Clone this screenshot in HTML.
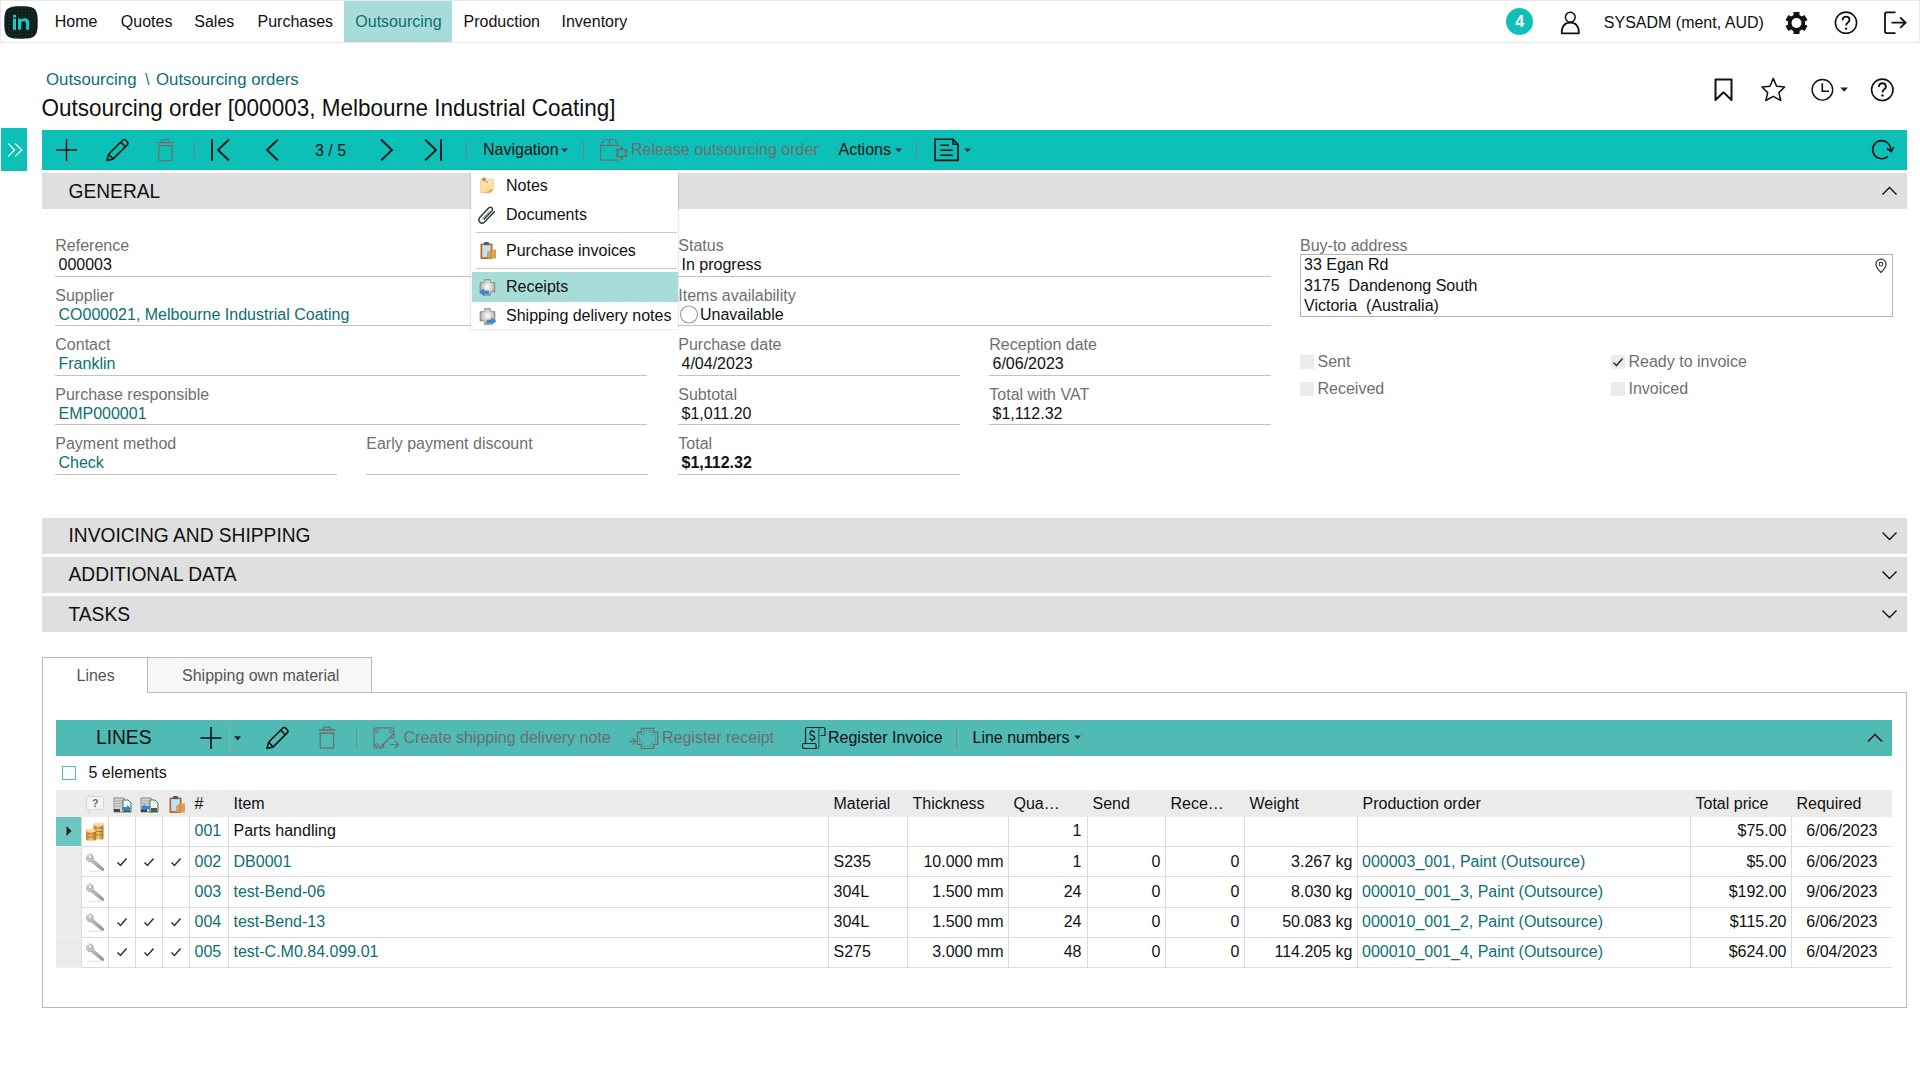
<!DOCTYPE html><html><head><meta charset="utf-8"><style>
html,body{margin:0;padding:0;width:1920px;height:1080px;overflow:hidden;background:#fff;font-family:"Liberation Sans", sans-serif;}
.t{position:absolute;white-space:pre;}
.b{position:absolute;}
</style></head><body>
<div class="b" style="left:0px;top:0px;width:1918px;height:41px;border:1px solid #e9e9e9;background:#fff"></div>
<svg class="b" style="left:4px;top:6px;" width="34" height="33" viewBox="0 0 34 33"><defs><pattern id="dots" width="3.3" height="3.3" patternUnits="userSpaceOnUse"><circle cx="1.6" cy="1.6" r="0.45" fill="#2a6b68"/></pattern></defs>
<path d="M0.3 16.5 C0.3 2.5 2.8 0.3 17 0.3 C31.2 0.3 33.7 2.5 33.7 16.5 C33.7 30.5 31.2 32.7 17 32.7 C2.8 32.7 0.3 30.5 0.3 16.5Z" fill="#0f1d1d"/>
<path d="M0.3 16.5 C0.3 2.5 2.8 0.3 17 0.3 C31.2 0.3 33.7 2.5 33.7 16.5 C33.7 30.5 31.2 32.7 17 32.7 C2.8 32.7 0.3 30.5 0.3 16.5Z" fill="url(#dots)"/>
<rect x="9" y="12.6" width="3" height="11.2" fill="#1ccac2"/><rect x="9" y="8.9" width="3" height="2.6" fill="#1ccac2"/>
<path d="M14 23.8 V12.6 H16.9 V14.1 Q18.3 12.3 20.8 12.3 Q25.1 12.3 25.1 16.9 V23.8 H22.1 V17.6 Q22.1 15.1 20.1 15.1 Q17 15.1 17 18.2 V23.8Z" fill="#1ccac2"/></svg>
<div class="b" style="left:344px;top:1px;width:108px;height:41px;background:#a8dcd9"></div>
<div class="t" style="left:54.80px;top:14px;font-size:16px;line-height:16px;color:#111;font-weight:normal;">Home</div>
<div class="t" style="left:120.80px;top:14px;font-size:16px;line-height:16px;color:#111;font-weight:normal;">Quotes</div>
<div class="t" style="left:194.30px;top:14px;font-size:16px;line-height:16px;color:#111;font-weight:normal;">Sales</div>
<div class="t" style="left:257.50px;top:14px;font-size:16px;line-height:16px;color:#111;font-weight:normal;">Purchases</div>
<div class="t" style="left:355.30px;top:14px;font-size:16px;line-height:16px;color:#0d6f73;font-weight:normal;">Outsourcing</div>
<div class="t" style="left:463.50px;top:14px;font-size:16px;line-height:16px;color:#111;font-weight:normal;">Production</div>
<div class="t" style="left:561.50px;top:14px;font-size:16px;line-height:16px;color:#111;font-weight:normal;">Inventory</div>
<svg class="b" style="left:1506px;top:8px;" width="27" height="27" viewBox="0 0 27 27"><circle cx="13.5" cy="13.5" r="13.5" fill="#12bfb6"/></svg>
<div class="t" style="left:1515.20px;top:14px;font-size:16px;line-height:16px;color:#fff;font-weight:bold;transform:scaleY(1.08);transform-origin:0 13px;">4</div>
<svg class="b" style="left:1559px;top:10px;" width="24" height="26" viewBox="0 0 24 26"><circle cx="11.3" cy="7.2" r="4.9" fill="none" stroke="#111" stroke-width="1.5"/><path d="M2.7 23.3 Q2.7 12.6 11.3 12.6 Q19.9 12.6 19.9 23.3 Z" fill="none" stroke="#111" stroke-width="1.7" stroke-linejoin="round"/></svg>
<div class="t" style="left:1603.80px;top:15px;font-size:16px;line-height:16px;color:#111;font-weight:normal;">SYSADM (ment, AUD)</div>
<svg class="b" style="left:1785px;top:11px;" width="23" height="24" viewBox="0 0 23 24"><g transform="translate(11.5,12)"><g fill="#111">
<rect x="-3" y="-11" width="6" height="22"/><rect x="-3" y="-11" width="6" height="22" transform="rotate(60)"/><rect x="-3" y="-11" width="6" height="22" transform="rotate(120)"/>
<circle r="8.6"/></g><circle r="5" fill="#fff"/></g></svg>
<svg class="b" style="left:1834px;top:11px;" width="24" height="24" viewBox="0 0 24 24"><circle cx="12" cy="11.7" r="10.6" fill="none" stroke="#111" stroke-width="1.6"/><path d="M8.6 9.2 Q8.6 5.6 12 5.6 Q15.5 5.6 15.5 8.8 Q15.5 10.6 13.6 11.7 Q12.2 12.5 12.2 14.6" fill="none" stroke="#111" stroke-width="1.9"/><circle cx="12.1" cy="17.6" r="1.2" fill="#111"/></svg>
<svg class="b" style="left:1883px;top:11px;" width="26" height="24" viewBox="0 0 26 24"><path d="M12.5 1.3 H3.6 Q2 1.3 2 2.9 V20.6 Q2 22.2 3.6 22.2 H12.5" fill="none" stroke="#111" stroke-width="1.8"/><path d="M8.6 11.7 H22.6 M17.2 6.5 L22.6 11.7 L17.2 16.9" fill="none" stroke="#111" stroke-width="1.8"/></svg>
<div class="t" style="left:46.00px;top:72px;font-size:16.8px;line-height:16.8px;color:#0d6f73;font-weight:normal;">Outsourcing</div>
<div class="t" style="left:145.00px;top:72px;font-size:16.8px;line-height:16.8px;color:#0d6f73;font-weight:normal;transform:scaleX(0.9)">\</div>
<div class="t" style="left:156.00px;top:72px;font-size:16.8px;line-height:16.8px;color:#0d6f73;font-weight:normal;">Outsourcing orders</div>
<div class="t" style="left:41.50px;top:98px;font-size:22.5px;line-height:22.5px;color:#111;font-weight:normal;transform:scaleY(1.1);transform-origin:0 18px;">Outsourcing order [000003, Melbourne Industrial Coating]</div>
<svg class="b" style="left:1712px;top:77px;" width="23" height="26" viewBox="0 0 23 26"><path d="M3.5 2.5 H19.5 V23 L11.5 15.3 L3.5 23 Z" fill="none" stroke="#111" stroke-width="2" stroke-linejoin="round"/></svg>
<svg class="b" style="left:1760px;top:76px;" width="27" height="27" viewBox="0 0 27 27"><path d="M13.3 2.4 L16.6 10.2 L24.6 11 L18.9 16.6 L20.8 24.5 L13.3 20.4 L5.8 24.5 L7.7 16.6 L2 11 L10 10.2 Z" fill="none" stroke="#111" stroke-width="1.5" stroke-linejoin="round"/></svg>
<svg class="b" style="left:1810px;top:77px;" width="40" height="26" viewBox="0 0 40 26"><circle cx="12.4" cy="12.8" r="10.3" fill="none" stroke="#111" stroke-width="1.4"/><path d="M12.3 6.2 V14.3 H19" fill="none" stroke="#111" stroke-width="1.6"/><path d="M30.3 10.6 H38 L34.2 14.8Z" fill="#222"/></svg>
<svg class="b" style="left:1870px;top:77px;" width="25" height="26" viewBox="0 0 25 26"><circle cx="12.3" cy="12.8" r="10.7" fill="none" stroke="#111" stroke-width="1.6"/><path d="M8.9 10 Q8.9 6.3 12.4 6.3 Q15.9 6.3 15.9 9.6 Q15.9 11.4 14 12.5 Q12.6 13.3 12.6 15.4" fill="none" stroke="#111" stroke-width="1.9"/><circle cx="12.5" cy="18.4" r="1.2" fill="#111"/></svg>
<div class="b" style="left:1px;top:128px;width:26px;height:43px;background:#0cc0b8"></div>
<svg class="b" style="left:1px;top:128px;" width="26" height="43" viewBox="0 0 26 43"><path d="M7.3 15.6 L13.6 22 L7.3 28.4 M14.3 15.6 L20.8 22 L14.3 28.4" fill="none" stroke="#fff" stroke-width="1.2"/></svg>
<div class="b" style="left:42px;top:130px;width:1865px;height:40px;background:#0cc0b8"></div>
<svg class="b" style="left:54px;top:137px;" width="26" height="26" viewBox="0 0 26 26"><path d="M12.5 2 V24 M2 13 H23" stroke="#111" stroke-width="1.3"/></svg>
<svg class="b" style="left:104px;top:137px;" width="26" height="26" viewBox="0 0 26 26"><path d="M3 23.5 L4.6 17.3 L18.6 3.3 Q20.2 1.7 21.8 3.3 L23.2 4.7 Q24.8 6.3 23.2 7.9 L9.2 21.9 Z M4.6 17.3 L9.2 21.9 M16.8 5.1 L21.4 9.7" fill="none" stroke="#111" stroke-width="1.5" stroke-linejoin="round"/></svg>
<svg class="b" style="left:154px;top:137px;" width="22" height="26" viewBox="0 0 22 26"><path d="M3 5.6 H19.6 M7 5.4 L8.2 2.6 H14.4 L15.6 5.4 M4.8 8.6 H18 V22.4 Q18 23.6 16.8 23.6 H6 Q4.8 23.6 4.8 22.4 Z" fill="none" stroke="#6e6e6e" stroke-width="1.3"/></svg>
<div class="b" style="left:194px;top:141px;width:1px;height:18px;background:#7e7a85"></div>
<svg class="b" style="left:205px;top:137px;" width="30" height="26" viewBox="0 0 30 26"><path d="M7 2 V24 M24 2.5 L13 13 L24 23.5" fill="none" stroke="#111" stroke-width="1.8"/></svg>
<svg class="b" style="left:258px;top:137px;" width="26" height="26" viewBox="0 0 26 26"><path d="M20 2.5 L9 13 L20 23.5" fill="none" stroke="#111" stroke-width="1.8"/></svg>
<div class="t" style="left:315.00px;top:143px;font-size:16px;line-height:16px;color:#111;font-weight:normal;">3 / 5</div>
<svg class="b" style="left:372px;top:137px;" width="26" height="26" viewBox="0 0 26 26"><path d="M9 2.5 L20 13 L9 23.5" fill="none" stroke="#111" stroke-width="1.8"/></svg>
<svg class="b" style="left:418px;top:137px;" width="30" height="26" viewBox="0 0 30 26"><path d="M7 2.5 L18 13 L7 23.5 M23 2 V24" fill="none" stroke="#111" stroke-width="1.8"/></svg>
<div class="b" style="left:466px;top:141px;width:1px;height:18px;background:#7e7a85"></div>
<div class="t" style="left:483.00px;top:142px;font-size:16px;line-height:16px;color:#111;font-weight:normal;">Navigation</div>
<svg class="b" style="left:560px;top:146px;" width="10" height="8" viewBox="0 0 10 8"><path d="M1.2 2.4 H8 L4.6 6.2Z" fill="#333"/></svg>
<div class="b" style="left:583px;top:141px;width:1px;height:18px;background:#7e7a85"></div>
<svg class="b" style="left:598px;top:137px;" width="34" height="26" viewBox="0 0 34 26"><path d="M2.6 8.3 L6.5 2.5 H17 L20.4 8.3 V22.2 Q20.4 23.2 19.4 23.2 H3.6 Q2.6 23.2 2.6 22.2 Z M2.6 8.3 H20.4 M11.5 2.5 V8.3" fill="none" stroke="#6e6e6e" stroke-width="1.2"/><circle cx="23.5" cy="16" r="7.6" fill="#0cc0b8"/><g transform="translate(23.5,16)"><g fill="#6e6e6e"><rect x="-1.4" y="-6.5" width="2.8" height="13"/><rect x="-1.4" y="-6.5" width="2.8" height="13" transform="rotate(60)"/><rect x="-1.4" y="-6.5" width="2.8" height="13" transform="rotate(120)"/><circle r="5"/></g><circle r="3.3" fill="#0cc0b8"/></g></svg>
<div class="t" style="left:631.00px;top:142px;font-size:16px;line-height:16px;color:#6e6e6e;font-weight:normal;">Release outsourcing order</div>
<div class="t" style="left:838.50px;top:142px;font-size:16px;line-height:16px;color:#111;font-weight:normal;">Actions</div>
<svg class="b" style="left:894px;top:146px;" width="10" height="8" viewBox="0 0 10 8"><path d="M1.2 2.4 H8 L4.6 6.2Z" fill="#333"/></svg>
<div class="b" style="left:916px;top:141px;width:1px;height:18px;background:#7e7a85"></div>
<svg class="b" style="left:932px;top:137px;" width="30" height="26" viewBox="0 0 30 26"><path d="M3 2.3 H21 L26 7.3 V23.4 H3 Z M21 2.3 V7.3 H26 M8.2 8.3 H17 M8.2 13.3 H20.8 M8.2 18.3 H20.8" fill="none" stroke="#111" stroke-width="1.6"/></svg>
<svg class="b" style="left:963px;top:146px;" width="10" height="8" viewBox="0 0 10 8"><path d="M1.2 2.4 H8 L4.6 6.2Z" fill="#333"/></svg>
<svg class="b" style="left:1868px;top:136px;" width="28" height="26" viewBox="0 0 28 26"><path d="M19.8 20.3 A9 9 0 1 1 22.7 14" fill="none" stroke="#111" stroke-width="1.6"/><path d="M19 12.5 L23.3 15.6 L25.6 11" fill="none" stroke="#111" stroke-width="1.6"/></svg>
<div class="b" style="left:42px;top:173px;width:1865px;height:36px;background:#dfdfdf"></div>
<div class="t" style="left:68.50px;top:182px;font-size:19.2px;line-height:19.2px;color:#111;font-weight:normal;transform:scaleY(1.07);transform-origin:0 16px;">GENERAL</div>
<svg class="b" style="left:1879.5px;top:183px;" width="20" height="16" viewBox="0 0 20 16"><path d="M2.5 11.5 L9.5 4.5 L16.5 11.5" fill="none" stroke="#111" stroke-width="1.4"/></svg>
<div class="t" style="left:55.30px;top:238px;font-size:16px;line-height:16px;color:#6f6f6f;font-weight:normal;">Reference</div>
<div class="t" style="left:58.50px;top:257px;font-size:16px;line-height:16px;color:#111;font-weight:normal;">000003</div>
<div class="b" style="left:55px;top:276px;width:592px;height:1px;background:#c3c3c3"></div>
<div class="t" style="left:55.30px;top:288px;font-size:16px;line-height:16px;color:#6f6f6f;font-weight:normal;">Supplier</div>
<div class="t" style="left:58.50px;top:307px;font-size:16px;line-height:16px;color:#0d6f73;font-weight:normal;">CO000021, Melbourne Industrial Coating</div>
<div class="b" style="left:55px;top:325px;width:592px;height:1px;background:#c3c3c3"></div>
<div class="t" style="left:55.30px;top:337px;font-size:16px;line-height:16px;color:#6f6f6f;font-weight:normal;">Contact</div>
<div class="t" style="left:58.50px;top:356px;font-size:16px;line-height:16px;color:#0d6f73;font-weight:normal;">Franklin</div>
<div class="b" style="left:55px;top:375px;width:592px;height:1px;background:#c3c3c3"></div>
<div class="t" style="left:55.30px;top:387px;font-size:16px;line-height:16px;color:#6f6f6f;font-weight:normal;">Purchase responsible</div>
<div class="t" style="left:58.50px;top:406px;font-size:16px;line-height:16px;color:#0d6f73;font-weight:normal;">EMP000001</div>
<div class="b" style="left:55px;top:424px;width:592px;height:1px;background:#c3c3c3"></div>
<div class="t" style="left:55.30px;top:436px;font-size:16px;line-height:16px;color:#6f6f6f;font-weight:normal;">Payment method</div>
<div class="t" style="left:58.50px;top:455px;font-size:16px;line-height:16px;color:#0d6f73;font-weight:normal;">Check</div>
<div class="b" style="left:55px;top:474px;width:282px;height:1px;background:#c3c3c3"></div>
<div class="t" style="left:366.30px;top:436px;font-size:16px;line-height:16px;color:#6f6f6f;font-weight:normal;">Early payment discount</div>
<div class="b" style="left:366px;top:474px;width:282px;height:1px;background:#c3c3c3"></div>
<div class="t" style="left:678.30px;top:238px;font-size:16px;line-height:16px;color:#6f6f6f;font-weight:normal;">Status</div>
<div class="t" style="left:681.50px;top:257px;font-size:16px;line-height:16px;color:#111;font-weight:normal;">In progress</div>
<div class="b" style="left:678px;top:276px;width:593px;height:1px;background:#c3c3c3"></div>
<div class="t" style="left:678.30px;top:288px;font-size:16px;line-height:16px;color:#6f6f6f;font-weight:normal;">Items availability</div>
<div class="b" style="left:678px;top:325px;width:593px;height:1px;background:#c3c3c3"></div>
<svg class="b" style="left:679px;top:305px;" width="19" height="19" viewBox="0 0 19 19"><circle cx="10" cy="9.5" r="8.5" fill="#fff" stroke="#999" stroke-width="1.1"/></svg>
<div class="t" style="left:700.00px;top:307px;font-size:16px;line-height:16px;color:#111;font-weight:normal;">Unavailable</div>
<div class="t" style="left:678.30px;top:337px;font-size:16px;line-height:16px;color:#6f6f6f;font-weight:normal;">Purchase date</div>
<div class="t" style="left:681.50px;top:356px;font-size:16px;line-height:16px;color:#111;font-weight:normal;">4/04/2023</div>
<div class="b" style="left:678px;top:375px;width:282px;height:1px;background:#c3c3c3"></div>
<div class="t" style="left:989.30px;top:337px;font-size:16px;line-height:16px;color:#6f6f6f;font-weight:normal;">Reception date</div>
<div class="t" style="left:992.50px;top:356px;font-size:16px;line-height:16px;color:#111;font-weight:normal;">6/06/2023</div>
<div class="b" style="left:989px;top:375px;width:282px;height:1px;background:#c3c3c3"></div>
<div class="t" style="left:678.30px;top:387px;font-size:16px;line-height:16px;color:#6f6f6f;font-weight:normal;">Subtotal</div>
<div class="t" style="left:681.50px;top:406px;font-size:16px;line-height:16px;color:#111;font-weight:normal;">$1,011.20</div>
<div class="b" style="left:678px;top:424px;width:282px;height:1px;background:#c3c3c3"></div>
<div class="t" style="left:989.30px;top:387px;font-size:16px;line-height:16px;color:#6f6f6f;font-weight:normal;">Total with VAT</div>
<div class="t" style="left:992.50px;top:406px;font-size:16px;line-height:16px;color:#111;font-weight:normal;">$1,112.32</div>
<div class="b" style="left:989px;top:424px;width:282px;height:1px;background:#c3c3c3"></div>
<div class="t" style="left:678.30px;top:436px;font-size:16px;line-height:16px;color:#6f6f6f;font-weight:normal;">Total</div>
<div class="t" style="left:681.50px;top:455px;font-size:16px;line-height:16px;color:#111;font-weight:bold;">$1,112.32</div>
<div class="b" style="left:678px;top:474px;width:282px;height:1px;background:#c3c3c3"></div>
<div class="t" style="left:1300.00px;top:238px;font-size:16px;line-height:16px;color:#6f6f6f;font-weight:normal;">Buy-to address</div>
<div class="b" style="left:1300px;top:254px;width:591px;height:61px;border:1px solid #b4b4b4;background:#fff"></div>
<div class="t" style="left:1304.00px;top:257px;font-size:16px;line-height:16px;color:#111;font-weight:normal;">33 Egan Rd</div>
<div class="t" style="left:1304.00px;top:278px;font-size:16px;line-height:16px;color:#111;font-weight:normal;">3175  Dandenong South</div>
<div class="t" style="left:1304.00px;top:298px;font-size:16px;line-height:16px;color:#111;font-weight:normal;">Victoria  (Australia)</div>
<svg class="b" style="left:1874px;top:258px;" width="14" height="16" viewBox="0 0 14 16"><path d="M7 14.5 Q2 9.5 2 6.2 A5 5 0 0 1 12 6.2 Q12 9.5 7 14.5Z" fill="none" stroke="#333" stroke-width="1.2"/><circle cx="7" cy="6.2" r="1.8" fill="none" stroke="#333" stroke-width="1.1"/></svg>
<div class="b" style="left:1300px;top:355px;width:14px;height:14px;background:#ebebeb"></div>
<div class="t" style="left:1317.50px;top:354px;font-size:16px;line-height:16px;color:#6f6f6f;font-weight:normal;">Sent</div>
<div class="b" style="left:1300px;top:382px;width:14px;height:14px;background:#ebebeb"></div>
<div class="t" style="left:1317.50px;top:381px;font-size:16px;line-height:16px;color:#6f6f6f;font-weight:normal;">Received</div>
<div class="b" style="left:1611px;top:355px;width:14px;height:14px;background:#ebebeb"></div>
<svg class="b" style="left:1611px;top:355px;" width="14" height="14" viewBox="0 0 14 14"><path d="M2.5 7.5 L5.5 10.5 L11.5 3.5" fill="none" stroke="#333" stroke-width="1.6"/></svg>
<div class="t" style="left:1628.50px;top:354px;font-size:16px;line-height:16px;color:#6f6f6f;font-weight:normal;">Ready to invoice</div>
<div class="b" style="left:1611px;top:382px;width:14px;height:14px;background:#ebebeb"></div>
<div class="t" style="left:1628.50px;top:381px;font-size:16px;line-height:16px;color:#6f6f6f;font-weight:normal;">Invoiced</div>
<div class="b" style="left:42px;top:518px;width:1865px;height:36px;background:#dfdfdf"></div>
<div class="t" style="left:68.50px;top:526px;font-size:19.2px;line-height:19.2px;color:#111;font-weight:normal;transform:scaleY(1.07);transform-origin:0 16px;">INVOICING AND SHIPPING</div>
<svg class="b" style="left:1879.5px;top:528px;" width="20" height="16" viewBox="0 0 20 16"><path d="M2.5 4.5 L9.5 11.5 L16.5 4.5" fill="none" stroke="#111" stroke-width="1.4"/></svg>
<div class="b" style="left:42px;top:557px;width:1865px;height:36px;background:#dfdfdf"></div>
<div class="t" style="left:68.50px;top:565px;font-size:19.2px;line-height:19.2px;color:#111;font-weight:normal;transform:scaleY(1.07);transform-origin:0 16px;">ADDITIONAL DATA</div>
<svg class="b" style="left:1879.5px;top:567px;" width="20" height="16" viewBox="0 0 20 16"><path d="M2.5 4.5 L9.5 11.5 L16.5 4.5" fill="none" stroke="#111" stroke-width="1.4"/></svg>
<div class="b" style="left:42px;top:596px;width:1865px;height:36px;background:#dfdfdf"></div>
<div class="t" style="left:68.50px;top:605px;font-size:19.2px;line-height:19.2px;color:#111;font-weight:normal;transform:scaleY(1.07);transform-origin:0 16px;">TASKS</div>
<svg class="b" style="left:1879.5px;top:606px;" width="20" height="16" viewBox="0 0 20 16"><path d="M2.5 4.5 L9.5 11.5 L16.5 4.5" fill="none" stroke="#111" stroke-width="1.4"/></svg>
<div class="b" style="left:42px;top:692px;width:1863px;height:314px;border:1px solid #b9b9b9"></div>
<div class="b" style="left:147px;top:657px;width:223px;height:34px;border:1px solid #b9b9b9;background:#f7f7f7"></div>
<div class="b" style="left:42px;top:657px;width:104px;height:35px;border:1px solid #b9b9b9;border-bottom:none;background:#fff"></div>
<div class="t" style="left:76.50px;top:668px;font-size:16px;line-height:16px;color:#555;font-weight:normal;">Lines</div>
<div class="t" style="left:182.00px;top:668px;font-size:16px;line-height:16px;color:#555;font-weight:normal;">Shipping own material</div>
<div class="b" style="left:56px;top:720px;width:1836px;height:36px;background:#50bab5"></div>
<div class="t" style="left:96.00px;top:728px;font-size:19.2px;line-height:19.2px;color:#111;font-weight:normal;transform:scaleY(1.07);transform-origin:0 16px;">LINES</div>
<svg class="b" style="left:199px;top:725px;" width="26" height="26" viewBox="0 0 26 26"><path d="M12 2 V24 M1.5 13 H22.5" stroke="#111" stroke-width="1.6"/></svg>
<svg class="b" style="left:228px;top:725px;" width="3" height="27" viewBox="0 0 3 27"><path d="M1.5 0 V27" stroke="#b3a4ab" stroke-width="1" stroke-dasharray="2.6 1.4"/></svg>
<svg class="b" style="left:232px;top:733px;" width="10" height="10" viewBox="0 0 10 10"><path d="M2.2 3.2 H9 L5.6 7.6Z" fill="#222"/></svg>
<svg class="b" style="left:264px;top:725px;" width="28" height="26" viewBox="0 0 28 26"><path d="M3 23.5 L4.6 17.3 L18.6 3.3 Q20.2 1.7 21.8 3.3 L23.2 4.7 Q24.8 6.3 23.2 7.9 L9.2 21.9 Z M4.6 17.3 L9.2 21.9 M16.8 5.1 L21.4 9.7" fill="none" stroke="#111" stroke-width="1.5" stroke-linejoin="round"/></svg>
<svg class="b" style="left:316px;top:725px;" width="22" height="26" viewBox="0 0 22 26"><path d="M2.4 5 H19.4 M6.8 4.8 L8 2.2 H14 L15.2 4.8 M4.2 8 H17.6 V22 Q17.6 23.2 16.4 23.2 H5.4 Q4.2 23.2 4.2 22 Z" fill="none" stroke="#6e6e6e" stroke-width="1.3"/></svg>
<div class="b" style="left:356px;top:727px;width:1px;height:21px;background:#7f8a8e"></div>
<svg class="b" style="left:371px;top:725px;" width="32" height="26" viewBox="0 0 32 26"><path d="M12.7 23 H4.5 Q2.9 23 2.9 21.4 V4.4 Q2.9 2.8 4.5 2.8 H21.4 Q23 2.8 23 4.4 V12.8 M8.4 23 L23 8.4 M12.7 19 V23 M19 12.8 H23 M19.2 19.5 H27.6 M23.6 15.6 L27.6 19.5 L23.6 23.4" fill="none" stroke="#6e6e6e" stroke-width="1.2"/><circle cx="5.9" cy="6.2" r="1.5" fill="none" stroke="#6e6e6e" stroke-width="1"/><circle cx="20" cy="6.2" r="1.5" fill="none" stroke="#6e6e6e" stroke-width="1"/><circle cx="5.9" cy="20.2" r="1.5" fill="none" stroke="#6e6e6e" stroke-width="1"/></svg>
<div class="t" style="left:403.50px;top:730px;font-size:16px;line-height:16px;color:#6e6e6e;font-weight:normal;">Create shipping delivery note</div>
<svg class="b" style="left:628px;top:725px;" width="32" height="26" viewBox="0 0 32 26"><path d="M13.4 3.4 H25.5 V7.4 H29.7 V19.5 H25.5 V23.5 H13.4 V19.5 H9.4 V7.4 H13.4 Z" fill="none" stroke="#6e6e6e" stroke-width="1.2"/><path d="M15.6 5.6 H23.3 V9.6 H27.5 V17.3 H23.3 V21.3 H15.6 V17.3 H11.6 V9.6 H15.6 Z" fill="none" stroke="#6e6e6e" stroke-width="0.9" stroke-dasharray="1 1.2"/><path d="M1.2 16.4 H7.7 M4.6 13.2 L7.7 16.4 L4.6 19.6" fill="none" stroke="#6e6e6e" stroke-width="1.1"/></svg>
<div class="t" style="left:662.00px;top:730px;font-size:16px;line-height:16px;color:#6e6e6e;font-weight:normal;">Register receipt</div>
<svg class="b" style="left:800px;top:725px;" width="28" height="26" viewBox="0 0 28 26"><path d="M5.5 18.5 V4.5 Q5.5 2.5 7.5 2.5 H23 Q25 2.5 25 4.5 V10.5 H20.5" fill="none" stroke="#222" stroke-width="1.2"/><path d="M20.5 2.8 Q18.8 3.2 18.8 5 V22 Q18.8 23.5 17 23.5" fill="none" stroke="#222" stroke-width="1.2" stroke-dasharray="1.2 0.8"/><path d="M17 23.5 H4 Q2.5 23.5 2.5 21.5 V20 Q2.5 18.5 4 18.5 H15 Q16 18.5 16 20 V22 Q16 23.5 17 23.5" fill="none" stroke="#222" stroke-width="1.2"/><path d="M14.5 8 Q14 6.2 12.2 6.2 Q10 6.2 10 8.2 Q10 10 12.2 10.4 Q14.7 10.9 14.7 12.8 Q14.7 14.8 12.3 14.8 Q10.3 14.8 9.8 13 M12.2 4.8 V6.2 M12.2 14.8 V16.5" fill="none" stroke="#222" stroke-width="1.3"/></svg>
<div class="t" style="left:828.00px;top:730px;font-size:16px;line-height:16px;color:#111;font-weight:normal;">Register Invoice</div>
<div class="b" style="left:956px;top:727px;width:1px;height:21px;background:#7f8a8e"></div>
<div class="t" style="left:972.50px;top:730px;font-size:16px;line-height:16px;color:#111;font-weight:normal;">Line numbers</div>
<svg class="b" style="left:1073px;top:733px;" width="10" height="8" viewBox="0 0 10 8"><path d="M1.2 2.4 H8 L4.6 6.2Z" fill="#333"/></svg>
<svg class="b" style="left:1865px;top:730px;" width="22" height="16" viewBox="0 0 22 16"><path d="M3 11.5 L10 4.5 L17 11.5" fill="none" stroke="#111" stroke-width="1.5"/></svg>
<div class="b" style="left:62px;top:766px;width:12px;height:12px;border:1px solid #50bab5;background:#fff"></div>
<div class="t" style="left:88.50px;top:765px;font-size:16px;line-height:16px;color:#111;font-weight:normal;">5 elements</div>
<div class="b" style="left:56px;top:790px;width:1836px;height:27px;background:#ebebeb"></div>
<div class="t" style="left:194.50px;top:796px;font-size:16px;line-height:16px;color:#111;font-weight:normal;">#</div>
<div class="t" style="left:233.50px;top:796px;font-size:16px;line-height:16px;color:#111;font-weight:normal;">Item</div>
<div class="t" style="left:833.50px;top:796px;font-size:16px;line-height:16px;color:#111;font-weight:normal;">Material</div>
<div class="t" style="left:912.50px;top:796px;font-size:16px;line-height:16px;color:#111;font-weight:normal;">Thickness</div>
<div class="t" style="left:1013.50px;top:796px;font-size:16px;line-height:16px;color:#111;font-weight:normal;">Qua…</div>
<div class="t" style="left:1092.50px;top:796px;font-size:16px;line-height:16px;color:#111;font-weight:normal;">Send</div>
<div class="t" style="left:1170.50px;top:796px;font-size:16px;line-height:16px;color:#111;font-weight:normal;">Rece…</div>
<div class="t" style="left:1249.50px;top:796px;font-size:16px;line-height:16px;color:#111;font-weight:normal;">Weight</div>
<div class="t" style="left:1362.50px;top:796px;font-size:16px;line-height:16px;color:#111;font-weight:normal;">Production order</div>
<div class="t" style="left:1695.50px;top:796px;font-size:16px;line-height:16px;color:#111;font-weight:normal;">Total price</div>
<div class="t" style="left:1796.50px;top:796px;font-size:16px;line-height:16px;color:#111;font-weight:normal;">Required</div>
<div class="b" style="left:56px;top:817px;width:25px;height:151px;background:#ebebeb"></div>
<div class="b" style="left:56px;top:817px;width:25px;height:29px;background:#6cc6c1"></div>
<div class="b" style="left:56px;top:846px;width:25px;height:1px;background:#f2f2f2"></div>
<div class="b" style="left:81px;top:846px;width:1811px;height:1px;background:#dcdcdc"></div>
<div class="b" style="left:56px;top:876px;width:25px;height:1px;background:#f2f2f2"></div>
<div class="b" style="left:81px;top:876px;width:1811px;height:1px;background:#dcdcdc"></div>
<div class="b" style="left:56px;top:907px;width:25px;height:1px;background:#f2f2f2"></div>
<div class="b" style="left:81px;top:907px;width:1811px;height:1px;background:#dcdcdc"></div>
<div class="b" style="left:56px;top:937px;width:25px;height:1px;background:#f2f2f2"></div>
<div class="b" style="left:81px;top:937px;width:1811px;height:1px;background:#dcdcdc"></div>
<div class="b" style="left:56px;top:967px;width:25px;height:1px;background:#f2f2f2"></div>
<div class="b" style="left:81px;top:967px;width:1811px;height:1px;background:#dcdcdc"></div>
<div class="b" style="left:81px;top:817px;width:1px;height:151px;background:#dcdcdc"></div>
<div class="b" style="left:108px;top:817px;width:1px;height:151px;background:#dcdcdc"></div>
<div class="b" style="left:135px;top:817px;width:1px;height:151px;background:#dcdcdc"></div>
<div class="b" style="left:162px;top:817px;width:1px;height:151px;background:#dcdcdc"></div>
<div class="b" style="left:189px;top:817px;width:1px;height:151px;background:#dcdcdc"></div>
<div class="b" style="left:228px;top:817px;width:1px;height:151px;background:#dcdcdc"></div>
<div class="b" style="left:828px;top:817px;width:1px;height:151px;background:#dcdcdc"></div>
<div class="b" style="left:907px;top:817px;width:1px;height:151px;background:#dcdcdc"></div>
<div class="b" style="left:1008px;top:817px;width:1px;height:151px;background:#dcdcdc"></div>
<div class="b" style="left:1087px;top:817px;width:1px;height:151px;background:#dcdcdc"></div>
<div class="b" style="left:1165px;top:817px;width:1px;height:151px;background:#dcdcdc"></div>
<div class="b" style="left:1244px;top:817px;width:1px;height:151px;background:#dcdcdc"></div>
<div class="b" style="left:1357px;top:817px;width:1px;height:151px;background:#dcdcdc"></div>
<div class="b" style="left:1690px;top:817px;width:1px;height:151px;background:#dcdcdc"></div>
<div class="b" style="left:1791px;top:817px;width:1px;height:151px;background:#dcdcdc"></div>
<svg class="b" style="left:64px;top:824px;" width="10" height="14" viewBox="0 0 10 14"><path d="M2.5 2 L7.5 7 L2.5 12Z" fill="#222"/></svg>
<div class="t" style="left:194.50px;top:823px;font-size:16px;line-height:16px;color:#0d6f73;font-weight:normal;">001</div>
<div class="t" style="left:233.50px;top:823px;font-size:16px;line-height:16px;color:#111;font-weight:normal;">Parts handling</div>
<div class="t" style="left:833.50px;top:823px;font-size:16px;line-height:16px;color:#111;font-weight:normal;"></div>
<div class="t" style="right:916.50px;top:823px;font-size:16px;line-height:16px;color:#111;font-weight:normal;"></div>
<div class="t" style="right:838.50px;top:823px;font-size:16px;line-height:16px;color:#111;font-weight:normal;">1</div>
<div class="t" style="right:759.50px;top:823px;font-size:16px;line-height:16px;color:#111;font-weight:normal;"></div>
<div class="t" style="right:680.50px;top:823px;font-size:16px;line-height:16px;color:#111;font-weight:normal;"></div>
<div class="t" style="right:567.50px;top:823px;font-size:16px;line-height:16px;color:#111;font-weight:normal;"></div>
<div class="t" style="left:1362.00px;top:823px;font-size:16px;line-height:16px;color:#0d6f73;font-weight:normal;"></div>
<div class="t" style="right:133.50px;top:823px;font-size:16px;line-height:16px;color:#111;font-weight:normal;">$75.00</div>
<div class="t" style="right:42.50px;top:823px;font-size:16px;line-height:16px;color:#111;font-weight:normal;">6/06/2023</div>
<div class="t" style="left:194.50px;top:854px;font-size:16px;line-height:16px;color:#0d6f73;font-weight:normal;">002</div>
<div class="t" style="left:233.50px;top:854px;font-size:16px;line-height:16px;color:#0d6f73;font-weight:normal;">DB0001</div>
<div class="t" style="left:833.50px;top:854px;font-size:16px;line-height:16px;color:#111;font-weight:normal;">S235</div>
<div class="t" style="right:916.50px;top:854px;font-size:16px;line-height:16px;color:#111;font-weight:normal;">10.000 mm</div>
<div class="t" style="right:838.50px;top:854px;font-size:16px;line-height:16px;color:#111;font-weight:normal;">1</div>
<div class="t" style="right:759.50px;top:854px;font-size:16px;line-height:16px;color:#111;font-weight:normal;">0</div>
<div class="t" style="right:680.50px;top:854px;font-size:16px;line-height:16px;color:#111;font-weight:normal;">0</div>
<div class="t" style="right:567.50px;top:854px;font-size:16px;line-height:16px;color:#111;font-weight:normal;">3.267 kg</div>
<div class="t" style="left:1362.00px;top:854px;font-size:16px;line-height:16px;color:#0d6f73;font-weight:normal;">000003_001, Paint (Outsource)</div>
<div class="t" style="right:133.50px;top:854px;font-size:16px;line-height:16px;color:#111;font-weight:normal;">$5.00</div>
<div class="t" style="right:42.50px;top:854px;font-size:16px;line-height:16px;color:#111;font-weight:normal;">6/06/2023</div>
<svg class="b" style="left:115px;top:855px;" width="14" height="14" viewBox="0 0 14 14"><path d="M2.5 7.5 L5.5 10.5 L11.5 3.5" fill="none" stroke="#333" stroke-width="1.5"/></svg>
<svg class="b" style="left:142px;top:855px;" width="14" height="14" viewBox="0 0 14 14"><path d="M2.5 7.5 L5.5 10.5 L11.5 3.5" fill="none" stroke="#333" stroke-width="1.5"/></svg>
<svg class="b" style="left:169px;top:855px;" width="14" height="14" viewBox="0 0 14 14"><path d="M2.5 7.5 L5.5 10.5 L11.5 3.5" fill="none" stroke="#333" stroke-width="1.5"/></svg>
<div class="t" style="left:194.50px;top:884px;font-size:16px;line-height:16px;color:#0d6f73;font-weight:normal;">003</div>
<div class="t" style="left:233.50px;top:884px;font-size:16px;line-height:16px;color:#0d6f73;font-weight:normal;">test-Bend-06</div>
<div class="t" style="left:833.50px;top:884px;font-size:16px;line-height:16px;color:#111;font-weight:normal;">304L</div>
<div class="t" style="right:916.50px;top:884px;font-size:16px;line-height:16px;color:#111;font-weight:normal;">1.500 mm</div>
<div class="t" style="right:838.50px;top:884px;font-size:16px;line-height:16px;color:#111;font-weight:normal;">24</div>
<div class="t" style="right:759.50px;top:884px;font-size:16px;line-height:16px;color:#111;font-weight:normal;">0</div>
<div class="t" style="right:680.50px;top:884px;font-size:16px;line-height:16px;color:#111;font-weight:normal;">0</div>
<div class="t" style="right:567.50px;top:884px;font-size:16px;line-height:16px;color:#111;font-weight:normal;">8.030 kg</div>
<div class="t" style="left:1362.00px;top:884px;font-size:16px;line-height:16px;color:#0d6f73;font-weight:normal;">000010_001_3, Paint (Outsource)</div>
<div class="t" style="right:133.50px;top:884px;font-size:16px;line-height:16px;color:#111;font-weight:normal;">$192.00</div>
<div class="t" style="right:42.50px;top:884px;font-size:16px;line-height:16px;color:#111;font-weight:normal;">9/06/2023</div>
<div class="t" style="left:194.50px;top:914px;font-size:16px;line-height:16px;color:#0d6f73;font-weight:normal;">004</div>
<div class="t" style="left:233.50px;top:914px;font-size:16px;line-height:16px;color:#0d6f73;font-weight:normal;">test-Bend-13</div>
<div class="t" style="left:833.50px;top:914px;font-size:16px;line-height:16px;color:#111;font-weight:normal;">304L</div>
<div class="t" style="right:916.50px;top:914px;font-size:16px;line-height:16px;color:#111;font-weight:normal;">1.500 mm</div>
<div class="t" style="right:838.50px;top:914px;font-size:16px;line-height:16px;color:#111;font-weight:normal;">24</div>
<div class="t" style="right:759.50px;top:914px;font-size:16px;line-height:16px;color:#111;font-weight:normal;">0</div>
<div class="t" style="right:680.50px;top:914px;font-size:16px;line-height:16px;color:#111;font-weight:normal;">0</div>
<div class="t" style="right:567.50px;top:914px;font-size:16px;line-height:16px;color:#111;font-weight:normal;">50.083 kg</div>
<div class="t" style="left:1362.00px;top:914px;font-size:16px;line-height:16px;color:#0d6f73;font-weight:normal;">000010_001_2, Paint (Outsource)</div>
<div class="t" style="right:133.50px;top:914px;font-size:16px;line-height:16px;color:#111;font-weight:normal;">$115.20</div>
<div class="t" style="right:42.50px;top:914px;font-size:16px;line-height:16px;color:#111;font-weight:normal;">6/06/2023</div>
<svg class="b" style="left:115px;top:915px;" width="14" height="14" viewBox="0 0 14 14"><path d="M2.5 7.5 L5.5 10.5 L11.5 3.5" fill="none" stroke="#333" stroke-width="1.5"/></svg>
<svg class="b" style="left:142px;top:915px;" width="14" height="14" viewBox="0 0 14 14"><path d="M2.5 7.5 L5.5 10.5 L11.5 3.5" fill="none" stroke="#333" stroke-width="1.5"/></svg>
<svg class="b" style="left:169px;top:915px;" width="14" height="14" viewBox="0 0 14 14"><path d="M2.5 7.5 L5.5 10.5 L11.5 3.5" fill="none" stroke="#333" stroke-width="1.5"/></svg>
<div class="t" style="left:194.50px;top:944px;font-size:16px;line-height:16px;color:#0d6f73;font-weight:normal;">005</div>
<div class="t" style="left:233.50px;top:944px;font-size:16px;line-height:16px;color:#0d6f73;font-weight:normal;">test-C.M0.84.099.01</div>
<div class="t" style="left:833.50px;top:944px;font-size:16px;line-height:16px;color:#111;font-weight:normal;">S275</div>
<div class="t" style="right:916.50px;top:944px;font-size:16px;line-height:16px;color:#111;font-weight:normal;">3.000 mm</div>
<div class="t" style="right:838.50px;top:944px;font-size:16px;line-height:16px;color:#111;font-weight:normal;">48</div>
<div class="t" style="right:759.50px;top:944px;font-size:16px;line-height:16px;color:#111;font-weight:normal;">0</div>
<div class="t" style="right:680.50px;top:944px;font-size:16px;line-height:16px;color:#111;font-weight:normal;">0</div>
<div class="t" style="right:567.50px;top:944px;font-size:16px;line-height:16px;color:#111;font-weight:normal;">114.205 kg</div>
<div class="t" style="left:1362.00px;top:944px;font-size:16px;line-height:16px;color:#0d6f73;font-weight:normal;">000010_001_4, Paint (Outsource)</div>
<div class="t" style="right:133.50px;top:944px;font-size:16px;line-height:16px;color:#111;font-weight:normal;">$624.00</div>
<div class="t" style="right:42.50px;top:944px;font-size:16px;line-height:16px;color:#111;font-weight:normal;">6/04/2023</div>
<svg class="b" style="left:115px;top:945px;" width="14" height="14" viewBox="0 0 14 14"><path d="M2.5 7.5 L5.5 10.5 L11.5 3.5" fill="none" stroke="#333" stroke-width="1.5"/></svg>
<svg class="b" style="left:142px;top:945px;" width="14" height="14" viewBox="0 0 14 14"><path d="M2.5 7.5 L5.5 10.5 L11.5 3.5" fill="none" stroke="#333" stroke-width="1.5"/></svg>
<svg class="b" style="left:169px;top:945px;" width="14" height="14" viewBox="0 0 14 14"><path d="M2.5 7.5 L5.5 10.5 L11.5 3.5" fill="none" stroke="#333" stroke-width="1.5"/></svg>
<div class="b" style="left:471px;top:170px;width:207px;height:159px;background:#fff;box-shadow:0 0 2px rgba(0,0,0,0.25)"></div>
<div class="b" style="left:476px;top:232px;width:201px;height:1px;background:#c8c8c8"></div>
<div class="b" style="left:476px;top:268px;width:201px;height:1px;background:#c8c8c8"></div>
<div class="b" style="left:472px;top:272px;width:206px;height:30px;background:#a8dcd9"></div>
<div class="t" style="left:506.00px;top:178px;font-size:16px;line-height:16px;color:#111;font-weight:normal;">Notes</div>
<div class="t" style="left:506.00px;top:207px;font-size:16px;line-height:16px;color:#111;font-weight:normal;">Documents</div>
<div class="t" style="left:506.00px;top:243px;font-size:16px;line-height:16px;color:#111;font-weight:normal;">Purchase invoices</div>
<div class="t" style="left:506.00px;top:279px;font-size:16px;line-height:16px;color:#111;font-weight:normal;">Receipts</div>
<div class="t" style="left:506.00px;top:308px;font-size:16px;line-height:16px;color:#111;font-weight:normal;">Shipping delivery notes</div>
<svg class="b" style="left:479px;top:177px;" width="16" height="18" viewBox="0 0 16 18"><defs><linearGradient id="ng" x1="0" y1="0" x2="0" y2="1"><stop offset="0" stop-color="#fde7b0"/><stop offset="1" stop-color="#f9d990"/></linearGradient></defs><path d="M1.5 2 H14.5 V12.5 L11 16 H2.5 Q1.5 16 1.5 15 Z" fill="url(#ng)" stroke="#eed39a" stroke-width="0.8"/><path d="M2 15.6 H11 L14.5 12.5 L11.5 12.8 Q10 13 10 14.5 Z" fill="#d99a55"/><circle cx="5" cy="2.6" r="2" fill="#c98a50"/><circle cx="8" cy="5" r="0.8" fill="#7a7a9a"/></svg>
<svg class="b" style="left:477px;top:205px;" width="20" height="22" viewBox="0 0 20 22"><g transform="scale(1.12)"><path d="M6.5 12.5 L13 5.5 Q14.6 3.8 13.2 2.5 Q11.8 1.2 10.2 2.9 L2.8 10.7 Q0.5 13.2 2.6 15.3 Q4.7 17.4 7 15 L15.5 6" fill="none" stroke="#2b3a3a" stroke-width="1.3" stroke-linecap="round"/><path d="M4.6 12.8 L11 6" fill="none" stroke="#8a9090" stroke-width="1"/></g></svg>
<svg class="b" style="left:479px;top:241px;" width="18" height="19" viewBox="0 0 18 19"><rect x="1.5" y="2.5" width="12" height="15.5" rx="1" fill="#b9651c"/><rect x="3.2" y="4.2" width="8.6" height="12" fill="#bfe3f5"/><rect x="5" y="1" width="5" height="3" rx="1" fill="#556"/><path d="M8 11 L12 8.5 H17 V17.5 H10 L8 16Z" fill="#d9a25a"/><path d="M12 8.5 V17.5" stroke="#b57b35" stroke-width="0.8"/></svg>
<svg class="b" style="left:479px;top:279px;" width="18" height="18" viewBox="0 0 18 18"><defs><radialGradient id="gg0" cx="0.5" cy="0.45" r="0.6"><stop offset="0" stop-color="#ffffff"/><stop offset="0.6" stop-color="#c8c8c8"/><stop offset="1" stop-color="#7a7a7a"/></radialGradient></defs><path d="M5.5 0.5 H11.5 V3.5 H16 V13 H11.5 V16.5 H5.5 V13 H1 V3.5 H5.5Z" fill="url(#gg0)" stroke="#8d8d8d" stroke-width="0.7"/><path d="M9.5 12 H4.8 V10 L0.5 13.3 L4.8 16.6 V14.5 H9.5Z" fill="#2f8ee0" stroke="#1c6fc0" stroke-width="0.5"/></svg>
<svg class="b" style="left:479px;top:308px;" width="18" height="18" viewBox="0 0 18 18"><defs><radialGradient id="gg1" cx="0.5" cy="0.45" r="0.6"><stop offset="0" stop-color="#ffffff"/><stop offset="0.6" stop-color="#c8c8c8"/><stop offset="1" stop-color="#7a7a7a"/></radialGradient></defs><path d="M5.5 0.5 H11.5 V3.5 H16 V13 H11.5 V16.5 H5.5 V13 H1 V3.5 H5.5Z" fill="url(#gg1)" stroke="#8d8d8d" stroke-width="0.7"/><path d="M8 12 H12.5 V10 L16.8 13.3 L12.5 16.6 V14.5 H8Z" fill="#2f8ee0" stroke="#1c6fc0" stroke-width="0.5"/></svg>
<svg class="b" style="left:85px;top:795px;" width="20" height="20" viewBox="0 0 20 20"><rect x="1.5" y="1.5" width="17" height="13" rx="2" fill="#f3f3f3" stroke="#d6d6d6" stroke-width="1"/><path d="M4 14.5 L3 18.5 L8 14.5" fill="#f3f3f3" stroke="#d6d6d6" stroke-width="1"/><text x="7.2" y="12" font-size="10" font-weight="bold" font-family="Liberation Sans" fill="#666">?</text></svg>
<svg class="b" style="left:113px;top:797px;" width="19" height="17" viewBox="0 0 19 17"><rect x="1" y="1" width="10" height="14" fill="#d4d4d4" stroke="#777" stroke-width="0.8"/><path d="M2.5 4 H9.5 M2.5 6.5 H9.5 M2.5 9 H9.5" stroke="#999" stroke-width="0.8"/><path d="M1 12 H7 V15 H1Z" fill="#444"/><path d="M10 3 H15 L18 6 V15 H10Z" fill="#f4f4f4" stroke="#3a7a3a" stroke-width="1"/><rect x="11" y="11" width="6" height="4" fill="#555"/><path d="M9 10 H14 V8 L18 11.5 L14 15 V13 H9Z" fill="#2b86d8"/></svg>
<svg class="b" style="left:140px;top:797px;" width="19" height="17" viewBox="0 0 19 17"><rect x="1" y="1" width="10" height="14" fill="#d4d4d4" stroke="#777" stroke-width="0.8"/><path d="M2.5 4 H9.5 M2.5 6.5 H9.5 M2.5 9 H9.5" stroke="#999" stroke-width="0.8"/><path d="M1 12 H7 V15 H1Z" fill="#444"/><path d="M10 3 H15 L18 6 V15 H10Z" fill="#f4f4f4" stroke="#3a7a3a" stroke-width="1"/><rect x="11" y="11" width="6" height="4" fill="#555"/><path d="M10 9 H5 V7 L1 10.5 L5 14 V12 H10Z" fill="#2b86d8"/></svg>
<svg class="b" style="left:168px;top:795px;" width="18" height="19" viewBox="0 0 18 19"><rect x="1.5" y="2.5" width="12" height="15.5" rx="1" fill="#b9651c"/><rect x="3.2" y="4.2" width="8.6" height="12" fill="#bfe3f5"/><rect x="5" y="1" width="5" height="3" rx="1" fill="#556"/><path d="M8 11 L12 8.5 H17 V17.5 H10 L8 16Z" fill="#d9a25a"/><path d="M12 8.5 V17.5" stroke="#b57b35" stroke-width="0.8"/></svg>
<svg class="b" style="left:85px;top:822px;" width="20" height="20" viewBox="0 0 20 20"><defs><linearGradient id="cg" x1="0" y1="0" x2="1" y2="0"><stop offset="0" stop-color="#c9862f"/><stop offset="0.5" stop-color="#f3c77a"/><stop offset="1" stop-color="#b8762a"/></linearGradient></defs><rect x="8.5" y="1.5" width="10" height="16" rx="1" fill="url(#cg)"/><ellipse cx="13.5" cy="2.5" rx="5" ry="1.6" fill="#f7dca0"/><path d="M9 6 H18 M9 9.5 H18 M9 13 H18" stroke="#9a5d1e" stroke-width="0.7"/><rect x="1" y="7.5" width="10" height="11" rx="1" fill="url(#cg)"/><ellipse cx="6" cy="8.5" rx="5" ry="1.6" fill="#f7dca0"/><path d="M1.5 12 H10.5 M1.5 15 H10.5" stroke="#9a5d1e" stroke-width="0.7"/></svg>
<svg class="b" style="left:85px;top:853px;" width="20" height="19" viewBox="0 0 20 19"><defs><linearGradient id="wg1" x1="0" y1="0" x2="1" y2="1"><stop offset="0" stop-color="#d8d8d8"/><stop offset="1" stop-color="#8e8e8e"/></linearGradient></defs><path d="M3.3 1.7 Q0.6 3.6 1.6 6.6 Q2.8 9.2 6 8.8 L16.5 17.3 Q18 18.3 18.8 17.2 Q19.5 16 18.2 15 L8.3 6.4 Q9 3.2 6.4 1.3 Q5.2 0.6 4.4 0.9 L6.6 3.4 L5.8 5.6 L3.8 5.6 Z" fill="url(#wg1)" stroke="#9b9b9b" stroke-width="0.6"/><ellipse cx="10" cy="18.2" rx="8" ry="0.8" fill="#e8e8e8"/></svg>
<svg class="b" style="left:85px;top:883px;" width="20" height="19" viewBox="0 0 20 19"><defs><linearGradient id="wg2" x1="0" y1="0" x2="1" y2="1"><stop offset="0" stop-color="#d8d8d8"/><stop offset="1" stop-color="#8e8e8e"/></linearGradient></defs><path d="M3.3 1.7 Q0.6 3.6 1.6 6.6 Q2.8 9.2 6 8.8 L16.5 17.3 Q18 18.3 18.8 17.2 Q19.5 16 18.2 15 L8.3 6.4 Q9 3.2 6.4 1.3 Q5.2 0.6 4.4 0.9 L6.6 3.4 L5.8 5.6 L3.8 5.6 Z" fill="url(#wg2)" stroke="#9b9b9b" stroke-width="0.6"/><ellipse cx="10" cy="18.2" rx="8" ry="0.8" fill="#e8e8e8"/></svg>
<svg class="b" style="left:85px;top:913px;" width="20" height="19" viewBox="0 0 20 19"><defs><linearGradient id="wg3" x1="0" y1="0" x2="1" y2="1"><stop offset="0" stop-color="#d8d8d8"/><stop offset="1" stop-color="#8e8e8e"/></linearGradient></defs><path d="M3.3 1.7 Q0.6 3.6 1.6 6.6 Q2.8 9.2 6 8.8 L16.5 17.3 Q18 18.3 18.8 17.2 Q19.5 16 18.2 15 L8.3 6.4 Q9 3.2 6.4 1.3 Q5.2 0.6 4.4 0.9 L6.6 3.4 L5.8 5.6 L3.8 5.6 Z" fill="url(#wg3)" stroke="#9b9b9b" stroke-width="0.6"/><ellipse cx="10" cy="18.2" rx="8" ry="0.8" fill="#e8e8e8"/></svg>
<svg class="b" style="left:85px;top:943px;" width="20" height="19" viewBox="0 0 20 19"><defs><linearGradient id="wg4" x1="0" y1="0" x2="1" y2="1"><stop offset="0" stop-color="#d8d8d8"/><stop offset="1" stop-color="#8e8e8e"/></linearGradient></defs><path d="M3.3 1.7 Q0.6 3.6 1.6 6.6 Q2.8 9.2 6 8.8 L16.5 17.3 Q18 18.3 18.8 17.2 Q19.5 16 18.2 15 L8.3 6.4 Q9 3.2 6.4 1.3 Q5.2 0.6 4.4 0.9 L6.6 3.4 L5.8 5.6 L3.8 5.6 Z" fill="url(#wg4)" stroke="#9b9b9b" stroke-width="0.6"/><ellipse cx="10" cy="18.2" rx="8" ry="0.8" fill="#e8e8e8"/></svg>
</body></html>
